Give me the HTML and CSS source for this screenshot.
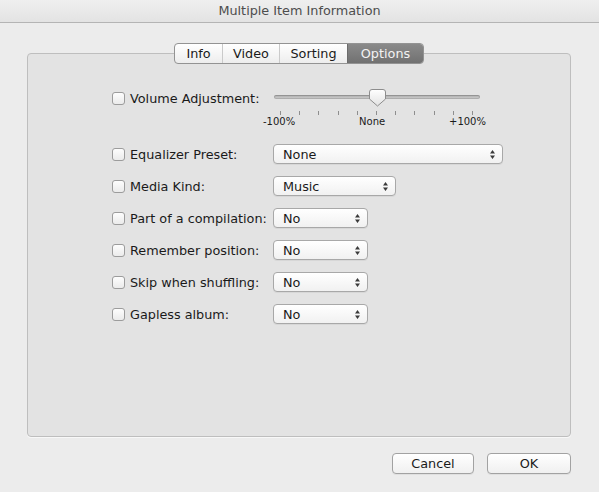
FILE: index.html
```html
<!DOCTYPE html>
<html lang="en">
<head>
    <meta charset="UTF-8">
    <title>Multiple Item Information</title>
    <link rel="stylesheet" href="styles.css">
</head>
<body>
    <div class="window">
        <div class="titlebar">Multiple Item Information</div>

        <div class="content">
            <div class="tabs">
                <span class="tab tab-info">Info</span>
                <span class="tab tab-video">Video</span>
                <span class="tab tab-sorting">Sorting</span>
                <span class="tab tab-options active">Options</span>
            </div>

            <div class="panel">
                <div class="row row-volume">
                    <label class="check"><span class="checkbox"></span>Volume Adjustment:</label>
                    <div class="slider">
                        <div class="track">
                            <svg class="thumb" width="17" height="18" viewBox="0 0 17 18">
                                <defs>
                                    <linearGradient id="thumbFill" x1="0" y1="0" x2="0" y2="1">
                                        <stop offset="0" stop-color="#ffffff"/>
                                        <stop offset="1" stop-color="#e2e2e2"/>
                                    </linearGradient>
                                </defs>
                                <path d="M3 0.5 H14 A2.5 2.5 0 0 1 16.5 3 V10 L8.5 17 L0.5 10 V3 A2.5 2.5 0 0 1 3 0.5 Z" fill="url(#thumbFill)" stroke="#8d8d8d"/>
                            </svg>
                        </div>
                        <div class="ticks">
                            <i></i><i></i><i></i><i></i><i></i><i></i><i></i><i></i><i></i><i></i><i></i>
                        </div>
                        <div class="scale">
                            <span>-100%</span>
                            <span>None</span>
                            <span>+100%</span>
                        </div>
                    </div>
                </div>

                <div class="row">
                    <label class="check"><span class="checkbox"></span>Equalizer Preset:</label>
                    <div class="popup popup-wide">
                        <span>None</span>
                        <svg class="arrows" width="7" height="11" viewBox="0 0 7 11"><path d="M3.5 1 L6 4.5 H1 Z M1 6.5 H6 L3.5 10 Z"/></svg>
                    </div>
                </div>

                <div class="row">
                    <label class="check"><span class="checkbox"></span>Media Kind:</label>
                    <div class="popup popup-mid">
                        <span>Music</span>
                        <svg class="arrows" width="7" height="11" viewBox="0 0 7 11"><path d="M3.5 1 L6 4.5 H1 Z M1 6.5 H6 L3.5 10 Z"/></svg>
                    </div>
                </div>

                <div class="row">
                    <label class="check"><span class="checkbox"></span>Part of a compilation:</label>
                    <div class="popup">
                        <span>No</span>
                        <svg class="arrows" width="7" height="11" viewBox="0 0 7 11"><path d="M3.5 1 L6 4.5 H1 Z M1 6.5 H6 L3.5 10 Z"/></svg>
                    </div>
                </div>

                <div class="row">
                    <label class="check"><span class="checkbox"></span>Remember position:</label>
                    <div class="popup">
                        <span>No</span>
                        <svg class="arrows" width="7" height="11" viewBox="0 0 7 11"><path d="M3.5 1 L6 4.5 H1 Z M1 6.5 H6 L3.5 10 Z"/></svg>
                    </div>
                </div>

                <div class="row">
                    <label class="check"><span class="checkbox"></span>Skip when shuffling:</label>
                    <div class="popup">
                        <span>No</span>
                        <svg class="arrows" width="7" height="11" viewBox="0 0 7 11"><path d="M3.5 1 L6 4.5 H1 Z M1 6.5 H6 L3.5 10 Z"/></svg>
                    </div>
                </div>

                <div class="row">
                    <label class="check"><span class="checkbox"></span>Gapless album:</label>
                    <div class="popup">
                        <span>No</span>
                        <svg class="arrows" width="7" height="11" viewBox="0 0 7 11"><path d="M3.5 1 L6 4.5 H1 Z M1 6.5 H6 L3.5 10 Z"/></svg>
                    </div>
                </div>
            </div>

            <div class="buttons">
                <button class="btn btn-cancel">Cancel</button>
                <button class="btn btn-ok">OK</button>
            </div>
        </div>
    </div>
</body>
</html>
```

FILE: styles.css
```css
body {
    margin: 0;
    font-family: "DejaVu Sans", sans-serif;
    font-size: 12.8px;
    color: #1a1a1a;
    background-color: #ececec;
}
.window {
    width: 599px;
    height: 492px;
    display: flex;
    flex-direction: column;
}
.titlebar {
    height: 22px;
    line-height: 22px;
    text-align: center;
    color: #4d4d4d;
    background: linear-gradient(#efefef, #e3e3e3);
    border-bottom: 1px solid #b4b4b4;
}
.content {
    flex: 1;
    padding: 20px 28px 0 27px;
    display: flex;
    flex-direction: column;
}

/* segmented tab control sitting on the panel edge */
.tabs {
    align-self: center;
    display: flex;
    height: 21px;
    box-sizing: border-box;
    border: 1px solid #939393;
    border-radius: 4px;
    background: linear-gradient(#ffffff, #ededed);
    margin-bottom: -11px;
    position: relative;
    z-index: 1;
    overflow: hidden;
}
.tab {
    line-height: 19px;
    text-align: center;
    border-left: 1px solid #cacaca;
}
.tab:first-child {
    border-left: none;
}
.tab-info { width: 47px; }
.tab-video { width: 56px; }
.tab-sorting { width: 67px; }
.tab-options { width: 75px; }
.tab.active {
    background: linear-gradient(#8a8a8a, #717171);
    color: #f3f3f3;
    border-left-color: #6c6c6c;
}

.panel {
    height: 384px;
    box-sizing: border-box;
    border: 1px solid #bebebe;
    border-radius: 4px;
    background: #e3e3e3;
    box-shadow: 0 1px 0 #f8f8f8;
    padding: 35px 0 0 84px;
    display: flex;
    flex-direction: column;
    gap: 12px;
}
.row {
    display: flex;
    align-items: center;
    height: 20px;
}
.row-volume {
    align-items: flex-start;
    height: auto;
    margin-bottom: 5px;
}
.check {
    width: 161px;
    height: 20px;
    display: flex;
    align-items: center;
    gap: 5px;
}
.row-volume .check {
    height: 18px;
}
.checkbox {
    width: 13px;
    height: 13px;
    box-sizing: border-box;
    border: 1px solid #9c9c9c;
    border-radius: 3px;
    background: linear-gradient(#fdfdfd, #ebebeb);
}

/* volume slider */
.slider {
    width: 223px;
    margin-left: -10px;
}
.track {
    position: relative;
    height: 4px;
    margin: 6px 6px 0 11px;
    border-radius: 2px;
    background: linear-gradient(#a9a9a9, #d2d2d2);
    box-shadow: inset 0 0 0 1px rgba(0,0,0,0.15);
}
.thumb {
    position: absolute;
    left: 95px;
    top: -6px;
}
.ticks {
    display: flex;
    justify-content: space-between;
    height: 4px;
    margin: 12px 13px 0 17px;
}
.ticks i {
    width: 1px;
    background: #8e8e8e;
}
.scale {
    display: flex;
    justify-content: space-between;
    font-size: 10px;
    line-height: 11px;
    margin-top: 1px;
}

/* popup buttons */
.popup {
    width: 95px;
    height: 20px;
    box-sizing: border-box;
    border: 1px solid #a8a8a8;
    border-radius: 4px;
    background: linear-gradient(#ffffff, #f1f1f1);
    box-shadow: 0 1px 0 rgba(0,0,0,0.05);
    display: flex;
    align-items: center;
    justify-content: space-between;
    padding: 0 6px 0 9px;
}
.popup-mid {
    width: 123px;
}
.popup-wide {
    width: 230px;
}
.arrows {
    fill: #3a3a3a;
}

.buttons {
    margin-top: 16px;
    display: flex;
    justify-content: flex-end;
    gap: 13px;
}
.btn {
    height: 21px;
    padding: 0;
    font-family: inherit;
    font-size: 12.8px;
    color: #1a1a1a;
    border: 1px solid #a2a2a2;
    border-radius: 4px;
    background: linear-gradient(#ffffff, #f0f0f0);
    box-shadow: 0 1px 0 rgba(0,0,0,0.05);
}
.btn-cancel {
    width: 82px;
}
.btn-ok {
    width: 84px;
}
```
